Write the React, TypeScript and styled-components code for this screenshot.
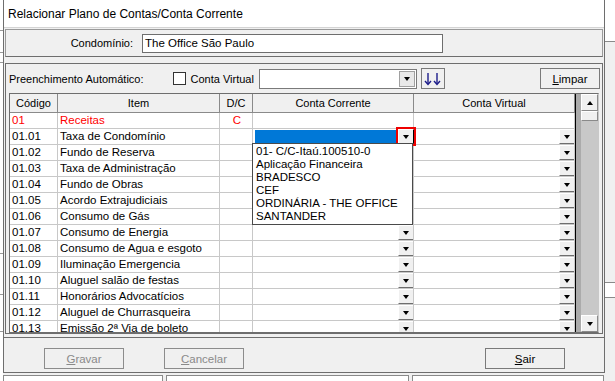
import React from "react";
import styled, { createGlobalStyle } from "styled-components";

const GlobalStyle = createGlobalStyle`
  html, body {
    margin: 0;
    padding: 0;
    background: #fff;
  }
  body {
    font-family: "Liberation Sans", Arial, sans-serif;
    font-size: 11px;
    color: #000;
  }
`;

type Row = {
  code: string;
  item: string;
  dc?: string;
  group?: boolean;
  open?: boolean;
};

const rows: Row[] = [
  { code: "01", item: "Receitas", dc: "C", group: true },
  { code: "01.01", item: "Taxa de Condomínio", open: true },
  { code: "01.02", item: "Fundo de Reserva" },
  { code: "01.03", item: "Taxa de Administração" },
  { code: "01.04", item: "Fundo de Obras" },
  { code: "01.05", item: "Acordo Extrajudiciais" },
  { code: "01.06", item: "Consumo de Gás" },
  { code: "01.07", item: "Consumo de Energia" },
  { code: "01.08", item: "Consumo de Agua e esgoto" },
  { code: "01.09", item: "Iluminação Emergencia" },
  { code: "01.10", item: "Aluguel salão de festas" },
  { code: "01.11", item: "Honorários Advocatícios" },
  { code: "01.12", item: "Aluguel de Churrasqueira" },
  { code: "01.13", item: "Emissão 2ª Via de boleto" },
];

const contas = [
  "01- C/C-Itaú.100510-0",
  "Aplicação Financeira",
  "BRADESCO",
  "CEF",
  "ORDINÁRIA - THE OFFICE",
  "SANTANDER",
];

const Screen = styled.div`
  width: 615px;
  height: 381px;
  overflow: hidden;
  display: grid;
  grid-template-columns: 3px 602px 10px;
  grid-template-rows: 373px 8px;
  background: #fff;
`;

const LeftStrip = styled.div`
  grid-column: 1;
  grid-row: 1 / 3;
  background: #fff;
  display: flex;
  flex-direction: column;
  overflow: hidden;
`;

const StripLine = styled.div<{ $gap: number }>`
  margin-top: ${(p) => p.$gap}px;
  height: 1px;
  background: #9a9a9a;
`;

const RightStrip = styled.div`
  grid-column: 3;
  grid-row: 1 / 3;
  display: flex;
  flex-direction: column;
  background: #f0f0f0;
`;

const RightTop = styled.div`
  height: 41px;
  background: #fff;
  border-bottom: 1px solid #8a8a8a;
`;

const RightBox = styled.div`
  margin-top: 240px;
  height: 14px;
  background: #fff;
  border-top: 1px solid #8a8a8a;
  border-bottom: 1px solid #8a8a8a;
`;

const BottomStrip = styled.div`
  grid-column: 2;
  grid-row: 2;
  display: flex;
  gap: 3px;
  padding-top: 2px;
  background: #f0f0f0;
`;

const BottomBox = styled.div<{ $w: number }>`
  width: ${(p) => p.$w}px;
  flex: none;
  border: 1px solid #8a8a8a;
  border-bottom: none;
  background: #fff;
`;

const Dialog = styled.div`
  grid-column: 2;
  grid-row: 1;
  box-sizing: border-box;
  display: flex;
  flex-direction: column;
  border-left: 1px solid #6e6e6e;
  border-right: 1px solid #6e6e6e;
  border-bottom: 1px solid #6e6e6e;
  background: #f0f0f0;
`;

const TitleBar = styled.div`
  height: 27px;
  border-bottom: 1px solid #d4d4d4;
  background: #fff;
  display: flex;
  align-items: center;
  padding-left: 4px;
  font-size: 12px;
`;

const CondoPanel = styled.div`
  box-sizing: border-box;
  height: 28px;
  margin: 1px 1px 0 1px;
  border: 1px solid #9a9a9a;
  border-bottom-color: #6e6e6e;
  display: flex;
  align-items: center;
`;

const FieldLabel = styled.div`
  width: 127px;
  text-align: right;
`;

const TextField = styled.div`
  box-sizing: border-box;
  margin-left: 9px;
  width: 301px;
  height: 19px;
  border: 1px solid #6e6e6e;
  background: #fff;
  padding-left: 2px;
  line-height: 16px;
  font-size: 11.5px;
`;

const MainPanel = styled.div`
  box-sizing: border-box;
  height: 271px;
  margin: 6px 1px 0 1px;
  border: 1px solid #6e6e6e;
  padding: 0 2px 0 3px;
  display: flex;
  flex-direction: column;
`;

const Toolbar = styled.div`
  height: 29px;
  display: flex;
  align-items: center;
`;

const ToolLabel = styled.span`
  white-space: nowrap;
`;

const CheckBox = styled.span`
  box-sizing: border-box;
  width: 13px;
  height: 13px;
  margin: 0 5px 0 29px;
  border: 1px solid #333;
  background: #fff;
`;

const Combo = styled.div`
  box-sizing: border-box;
  margin-left: 5px;
  width: 158px;
  height: 20px;
  border: 1px solid #7a7a7a;
  background: #fff;
  display: flex;
  justify-content: flex-end;
  padding: 1px;
`;

const ComboButton = styled.div`
  box-sizing: border-box;
  width: 16px;
  border: 1px solid #a0a0a0;
  background: #e8e8e8;
  display: flex;
  align-items: center;
  justify-content: center;
`;

const Tri = styled.span<{ $up?: boolean }>`
  width: 0;
  height: 0;
  border-left: 3.5px solid transparent;
  border-right: 3.5px solid transparent;
  ${(p) =>
    p.$up ? "border-bottom: 4px solid #000;" : "border-top: 4px solid #000;"}
`;

const IconButton = styled.div`
  box-sizing: border-box;
  margin-left: 4px;
  width: 24px;
  height: 21px;
  border: 1px solid #7a7a7a;
  background: #f0f0f0;
  display: flex;
  align-items: center;
  justify-content: center;
`;

const PushButton = styled.div<{ $w?: number; $disabled?: boolean }>`
  box-sizing: border-box;
  width: ${(p) => p.$w ?? 80}px;
  height: 21px;
  flex: none;
  border: 1px solid ${(p) => (p.$disabled ? "#8c8c8c" : "#7a7a7a")};
  background: #f0f0f0;
  color: ${(p) => (p.$disabled ? "#8a8a8a" : "#000")};
  display: flex;
  align-items: center;
  justify-content: center;
  font-size: 11.5px;
  u {
    text-decoration: underline;
  }
`;

const Spacer = styled.div`
  flex: 1;
`;

const GridFrame = styled.div`
  box-sizing: border-box;
  width: 590px;
  height: 240px;
  border: 1px solid #6e6e6e;
  border-right-color: #c8c8c8;
  display: flex;
  overflow: hidden;
`;

const Table = styled.div`
  width: 565px;
  flex: none;
  display: flex;
  flex-direction: column;
  background: #fff;
`;

const Filler = styled.div`
  flex: 1;
  background: #ababab;
  border-left: 1px solid #000;
`;

const cols = "48px 162px 33px 161px 161px";

const HeaderRow = styled.div`
  display: grid;
  grid-template-columns: ${cols};
  height: 19px;
  flex: none;
  background: #f0f0f0;
  border-bottom: 1px solid #8a8a8a;
  box-sizing: border-box;
`;

const HeaderCell = styled.div`
  border-right: 1px solid #8a8a8a;
  text-align: center;
  line-height: 18px;
  white-space: nowrap;
  overflow: hidden;
`;

const BodyRow = styled.div<{ $red?: boolean }>`
  display: grid;
  grid-template-columns: ${cols};
  height: 16px;
  flex: none;
  color: ${(p) => (p.$red ? "#f00" : "#000")};
  font-size: 11.5px;
`;

const Cell = styled.div<{ $center?: boolean; $open?: boolean }>`
  box-sizing: border-box;
  position: relative;
  border-right: 1px solid #c8c8c8;
  border-bottom: 1px solid #c8c8c8;
  padding-left: 2px;
  line-height: 15px;
  white-space: nowrap;
  overflow: ${(p) => (p.$open ? "visible" : "hidden")};
  display: flex;
  justify-content: ${(p) => (p.$center ? "center" : "flex-start")};
  z-index: ${(p) => (p.$open ? 2 : "auto")};
`;

const Selection = styled.div`
  flex: 1;
  margin: 1px 0 1px 0;
  background: #0078d7;
`;

const CellButton = styled.div<{ $marked?: boolean }>`
  box-sizing: border-box;
  margin-left: auto;
  margin-right: -1px;
  width: 16px;
  height: 15px;
  flex: none;
  border-top: 1px solid #fff;
  border-left: 1px solid #fff;
  border-right: 1px solid #000;
  border-bottom: 1px solid #6e6e6e;
  background: #f0f0f0;
  display: flex;
  align-items: center;
  justify-content: center;
  ${(p) => (p.$marked ? "outline: 2px solid #ee0000; outline-offset: 0;" : "")}
`;

const DropList = styled.div`
  position: absolute;
  top: 14px;
  left: -1px;
  width: 161px;
  box-sizing: border-box;
  border: 1px solid #4a4a4a;
  background: #fff;
  padding: 1px 0 1px 3px;
  color: #000;
`;

const DropItem = styled.div`
  height: 13px;
  line-height: 13px;
`;

const Scrollbar = styled.div`
  width: 17px;
  flex: none;
  display: flex;
  flex-direction: column;
  background: #c8c8c8;
`;

const ScrollButton = styled.div`
  box-sizing: border-box;
  height: 17px;
  flex: none;
  border: 1px solid #fff;
  border-right-color: #8a8a8a;
  border-bottom-color: #8a8a8a;
  background: #f0f0f0;
  display: flex;
  align-items: center;
  justify-content: center;
`;

const Thumb = styled.div`
  box-sizing: border-box;
  height: 10px;
  flex: none;
  background: #f0f0f0;
  border: 1px solid #fff;
  border-right-color: #8a8a8a;
  border-bottom-color: #8a8a8a;
`;

const ButtonBar = styled.div`
  box-sizing: border-box;
  margin: 3px 0 0 0;
  flex: 1;
  border-top: 1px solid #6e6e6e;
  display: flex;
  align-items: flex-start;
  padding: 10px 39px 0 40px;
  gap: 40px;
`;

const ArrowsIcon = () => (
  <svg width="18" height="14" viewBox="0 0 18 14">
    <g stroke="#1c1c8a" strokeWidth="1.4" fill="none">
      <path d="M4 1 V12" />
      <path d="M1 9 L4 12.5 L7 9" />
      <path d="M13 1 V12" />
      <path d="M10 9 L13 12.5 L16 9" />
    </g>
  </svg>
);

const App = () => {
  return (
    <>
      <GlobalStyle />
      <Screen>
        <LeftStrip>
          <StripLine $gap={30} />
          <StripLine $gap={21} />
          <StripLine $gap={9} />
          <StripLine $gap={190} />
          <StripLine $gap={40} />
          <StripLine $gap={36} />
        </LeftStrip>
        <Dialog>
          <TitleBar>Relacionar Plano de Contas/Conta Corrente</TitleBar>
          <CondoPanel>
            <FieldLabel>Condomínio:</FieldLabel>
            <TextField>The Office São Paulo</TextField>
          </CondoPanel>
          <MainPanel>
            <Toolbar>
              <ToolLabel>Preenchimento Automático:</ToolLabel>
              <CheckBox />
              <ToolLabel>Conta Virtual</ToolLabel>
              <Combo>
                <ComboButton>
                  <Tri />
                </ComboButton>
              </Combo>
              <IconButton>
                <ArrowsIcon />
              </IconButton>
              <Spacer />
              <PushButton $w={60}>
                <span>
                  <u>L</u>impar
                </span>
              </PushButton>
            </Toolbar>
            <GridFrame>
              <Table>
                <HeaderRow>
                  <HeaderCell>Código</HeaderCell>
                  <HeaderCell>Item</HeaderCell>
                  <HeaderCell>D/C</HeaderCell>
                  <HeaderCell>Conta Corrente</HeaderCell>
                  <HeaderCell>Conta Virtual</HeaderCell>
                </HeaderRow>
                {rows.map((r) => (
                  <BodyRow key={r.code} $red={r.group}>
                    <Cell>{r.code}</Cell>
                    <Cell>{r.item}</Cell>
                    <Cell $center>{r.dc ?? ""}</Cell>
                    <Cell $open={r.open}>
                      {r.open && <Selection />}
                      {!r.group && (
                        <CellButton $marked={r.open}>
                          <Tri />
                        </CellButton>
                      )}
                      {r.open && (
                        <DropList>
                          {contas.map((c) => (
                            <DropItem key={c}>{c}</DropItem>
                          ))}
                        </DropList>
                      )}
                    </Cell>
                    <Cell>
                      {!r.group && (
                        <CellButton>
                          <Tri />
                        </CellButton>
                      )}
                    </Cell>
                  </BodyRow>
                ))}
              </Table>
              <Filler />
              <Scrollbar>
                <ScrollButton>
                  <Tri $up />
                </ScrollButton>
                <Thumb />
                <Spacer />
                <ScrollButton>
                  <Tri />
                </ScrollButton>
              </Scrollbar>
            </GridFrame>
          </MainPanel>
          <ButtonBar>
            <PushButton $disabled>
              <span>
                <u>G</u>ravar
              </span>
            </PushButton>
            <PushButton $disabled>
              <span>
                <u>C</u>ancelar
              </span>
            </PushButton>
            <Spacer />
            <PushButton>
              <span>
                <u>S</u>air
              </span>
            </PushButton>
          </ButtonBar>
        </Dialog>
        <RightStrip>
          <RightTop />
          <RightBox />
        </RightStrip>
        <BottomStrip>
          <BottomBox $w={158} />
          <BottomBox $w={241} />
          <BottomBox $w={190} />
        </BottomStrip>
      </Screen>
    </>
  );
};

export default App;
